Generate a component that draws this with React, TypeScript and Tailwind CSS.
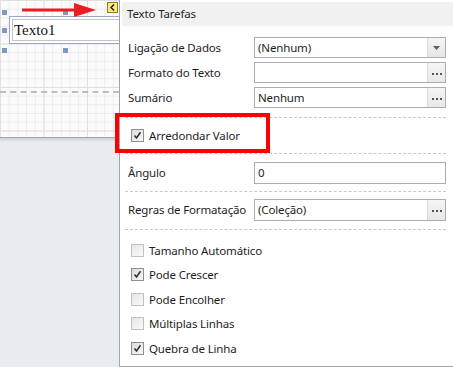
import React from "react";

const font = { fontFamily: '"Noto Sans", "Open Sans", sans-serif' };

function Check({ checked }: { checked?: boolean }) {
  return (
    <div
      className={
        "w-[13px] h-[13px] border flex items-center justify-center shrink-0 " +
        (checked
          ? "border-[#8e8f8f] bg-[linear-gradient(135deg,#dcdcdc,#f8f8f8)]"
          : "border-[#c2c2c2] bg-[linear-gradient(135deg,#e6e6e6,#fafafa)]")
      }
    >
      {checked && (
        <svg width="9" height="9" viewBox="0 0 9 9">
          <path d="M1.5 4.5 L3.5 7 L7.5 1.2" fill="none" stroke="#333" strokeWidth="1.6" />
        </svg>
      )}
    </div>
  );
}

function Sep() {
  return <div className="h-0 border-t border-dashed border-[#c9c9c9] mr-[7px] ml-[5px]" />;
}

function DropBtn() {
  return (
    <div className="w-[18px] h-full border-l border-[#dadada] bg-[linear-gradient(#f5f5f5,#e6e6e6)] flex items-center justify-center">
      <svg width="7" height="4" viewBox="0 0 7 4">
        <path d="M0 0 H7 L3.5 4 Z" fill="#5f5f5f" />
      </svg>
    </div>
  );
}

function DotsBtn() {
  return (
    <div className="w-[18px] h-full border-l border-[#dadada] bg-[linear-gradient(#f5f5f5,#e8e8e8)] flex items-center justify-center gap-[2px] pt-[2px]">
      <div className="w-[2px] h-[2px] bg-[#555]" />
      <div className="w-[2px] h-[2px] bg-[#555]" />
      <div className="w-[2px] h-[2px] bg-[#555]" />
    </div>
  );
}

const txt = "text-[11.5px] tracking-[-0.15px] text-[#1e1e1e] whitespace-nowrap";

function Field({
  label,
  value,
  btn,
  h,
}: {
  label: string;
  value: string;
  btn?: "drop" | "dots";
  h: string;
}) {
  return (
    <div className={"flex items-center pl-[8px] pr-[7px] " + h}>
      <div className={"w-[126px] " + txt}>{label}</div>
      <div className="flex-1 h-full border border-[#abadb3] bg-white flex items-center">
        <div className={"flex-1 pl-[3px] " + txt}>{value}</div>
        {btn === "drop" && <DropBtn />}
        {btn === "dots" && <DotsBtn />}
      </div>
    </div>
  );
}

function CheckRow({ label, checked, h }: { label: string; checked?: boolean; h: string }) {
  return (
    <div className={"flex items-center pl-[11px] gap-[5px] " + h}>
      <Check checked={checked} />
      <span className={txt}>{label}</span>
    </div>
  );
}

export default function App() {
  return (
    <div className="relative w-[453px] h-[367px] overflow-hidden flex bg-white" style={font}>
      {/* Designer surface */}
      <div className="w-[119px] shrink-0 flex flex-col overflow-hidden">
        <div className="relative h-[137px] bg-[#fbfbfb] bg-[linear-gradient(to_right,#e0e0e0_1px,transparent_1px),linear-gradient(to_bottom,#e0e0e0_1px,transparent_1px),linear-gradient(to_right,#ededed_1px,transparent_1px),linear-gradient(to_bottom,#ededed_1px,transparent_1px)] bg-[size:43.5px_43.5px,43.5px_43.5px,8.7px_8.7px,8.7px_8.7px]">
          {/* band divider */}
          <div className="absolute left-0 right-0 top-[91px] border-t-2 border-dashed border-[#bdbdbd]" />
          {/* text box */}
          <div className="absolute left-[9px] top-[16px] w-[130px] h-[28px] border border-[#9aa9c4] bg-white p-[2px]">
            <div className="w-full h-full border border-[#c4c4c4] flex items-center pl-[1px]">
              <span
                className="text-[15px] text-[#111] leading-none"
                style={{ fontFamily: '"Liberation Serif", "DejaVu Serif", serif' }}
              >
                Texto1
              </span>
            </div>
          </div>
          {/* handles */}
          <div className="absolute left-[2px] top-[10px] w-[5px] h-[5px] bg-[#7d9ac2]" />
          <div className="absolute left-[2px] top-[28px] w-[5px] h-[5px] bg-[#7d9ac2]" />
          <div className="absolute left-[2px] top-[48px] w-[5px] h-[5px] bg-[#7d9ac2]" />
          <div className="absolute left-[63px] top-[10px] w-[5px] h-[5px] bg-[#7d9ac2]" />
          <div className="absolute left-[63px] top-[48px] w-[5px] h-[5px] bg-[#7d9ac2]" />
          {/* arrow */}
          <svg className="absolute left-[20px] top-[2px]" width="78" height="16" viewBox="0 0 78 16">
            <path d="M2 8 H58" stroke="#ec1c24" strokeWidth="3" />
            <path d="M54 1 L76 8 L54 15 Z" fill="#ec1c24" />
          </svg>
          {/* smart tag button */}
          <div className="absolute left-[107px] top-[2px] w-[11px] h-[11px] bg-[#fbe97c] border border-[#8a7a2e] flex items-center justify-center">
            <svg width="5" height="7" viewBox="0 0 5 7">
              <path d="M4 0.5 L1 3.5 L4 6.5" fill="none" stroke="#222" strokeWidth="1.5" />
            </svg>
          </div>
        </div>
        <div className="h-[1px] bg-[#a8a8a8]" />
        <div className="h-[4px] bg-[linear-gradient(#c9ccd1,#e9ecf0)]" />
        <div className="flex-1 bg-[#e9ecf0]" />
      </div>

      {/* Property panel */}
      <div className="flex-1 flex flex-col border-l border-[#a5a5a5] border-b bg-white">
        <div className="h-[2px] bg-white" />
        <div className="h-[24px] ml-[2px] bg-[#f1f1f1] flex items-center pl-[5px] text-[11.5px] tracking-[-0.15px] text-[#262626]">
          Texto Tarefas
        </div>
        <div className="h-[11px]" />
        <Field label="Ligação de Dados" value="(Nenhum)" btn="drop" h="h-[21px]" />
        <div className="h-[4px]" />
        <Field label="Formato do Texto" value="" btn="dots" h="h-[21px]" />
        <div className="h-[4px]" />
        <Field label="Sumário" value="Nenhum" btn="dots" h="h-[21px]" />
        <div className="h-[9px]" />
        <Sep />
        <CheckRow label="Arredondar Valor" checked h="h-[35px]" />
        <Sep />
        <div className="h-[8px]" />
        <Field label="Ângulo" value="0" h="h-[22px]" />
        <div className="h-[7px]" />
        <Sep />
        <div className="h-[7px]" />
        <Field label="Regras de Formatação" value="(Coleção)" btn="dots" h="h-[22px]" />
        <div className="h-[8px]" />
        <Sep />
        <div className="h-[8px]" />
        <CheckRow label="Tamanho Automático" h="h-[24.5px]" />
        <CheckRow label="Pode Crescer" checked h="h-[24.5px]" />
        <CheckRow label="Pode Encolher" h="h-[24.5px]" />
        <CheckRow label="Múltiplas Linhas" h="h-[24.5px]" />
        <CheckRow label="Quebra de Linha" checked h="h-[24.5px]" />
        <div className="flex-1" />
      </div>

      {/* red annotation box */}
      <div className="absolute left-[115px] top-[113px] w-[155px] h-[40px] border-[4px] border-[#ff0000] pointer-events-none" />
    </div>
  );
}
